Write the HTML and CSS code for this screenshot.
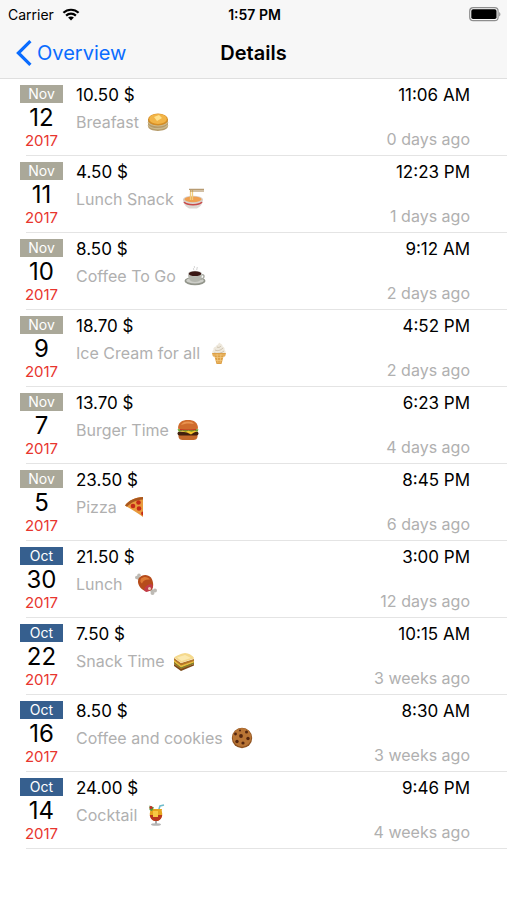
FILE: index.html
```html
<!DOCTYPE html>
<html lang="en">
<head>
  <meta charset="UTF-8">
  <meta name="viewport" content="width=device-width, initial-scale=1">
  <title>Details</title>
  <link rel="stylesheet" href="styles.css">
</head>
<body>
  <header class="header">
    <div class="status">
      <div class="carrier">
        <span>Carrier</span>
        <svg class="wifi" viewBox="0 0 18 13" aria-hidden="true">
          <path d="M1.4 4.8C5.6.7 12.4.7 16.6 4.8M4.1 7.6c2.8-2.6 7-2.6 9.8 0" fill="none" stroke="#000" stroke-width="2.2"/>
          <path d="M9 12.4 6.1 9.6c1.6-1.5 4.2-1.5 5.8 0z"/>
        </svg>
      </div>
      <span class="clock">1:57 PM</span>
      <svg class="battery" viewBox="0 0 32 15" aria-hidden="true">
        <rect x="0.7" y="0.7" width="28.4" height="13" rx="3.5" fill="#f7f7f7" stroke="#8e8e8e" stroke-width="1.2"/>
        <rect x="2.3" y="2.3" width="25.2" height="9.8" rx="1.8"/>
        <path d="M30.2 5v4.6c1.6-.8 1.6-3.8 0-4.6z" fill="#8e8e8e"/>
      </svg>
    </div>
    <nav class="nav">
      <a class="back" href="#">
        <svg class="chevron" viewBox="0 0 16 26" aria-hidden="true">
          <path d="M14.4 1.2 2.4 13l12 11.8" fill="none" stroke="#0a6cff" stroke-width="3.2"/>
        </svg>
        <span>Overview</span>
      </a>
      <h1 class="title">Details</h1>
    </nav>
  </header>

  <ul class="list">
    <li class="item">
      <div class="date">
        <span class="month">Nov</span>
        <span class="day">12</span>
        <span class="year">2017</span>
      </div>
      <div class="info">
        <span class="price">10.50 $</span>
        <span class="name">Breafast
          <svg class="icon" viewBox="0 0 22 22" aria-hidden="true">
            <path d="M1 8v7c0 6.5 19.5 6.5 20 0V8z" fill="#b59a68"/>
            <path d="M1 11c3 5 16 5 20 0M1 14c3 5 16 5 20 0" fill="none" stroke="#cdb98c" stroke-width="1.3"/>
            <ellipse cx="11" cy="8.500" rx="10" ry="6" fill="#d58d25"/>
            <ellipse cx="11" cy="7.900" rx="8.800" ry="5" fill="#f2b447"/>
            <path d="M7 6l5-2 3 3-5 3z" fill="#ffe08a"/>
          </svg>
        </span>
      </div>
      <div class="when">
        <span class="time">11:06 AM</span>
        <span class="ago">0 days ago</span>
      </div>
    </li>
    <li class="item">
      <div class="date">
        <span class="month">Nov</span>
        <span class="day">11</span>
        <span class="year">2017</span>
      </div>
      <div class="info">
        <span class="price">4.50 $</span>
        <span class="name">Lunch Snack
          <svg class="icon" viewBox="0 0 22 22" aria-hidden="true">
            <path d="M1 11c0 5 3 8 6 9.500h8c3-1.500 6-4.500 6-9.500z" fill="#dcd8d3"/>
            <path d="M2 14c3 3.500 15 3.500 18 0" fill="none" stroke="#c94a4a" stroke-width="1.5"/>
            <ellipse cx="11" cy="11.5" rx="10" ry="3.8" fill="#d9cfc8"/>
            <ellipse cx="11" cy="11.3" rx="8.6" ry="2.9" fill="#f0a050"/>
            <path d="M8.500 12V2M10.500 12V2" stroke="#f2cb7a" stroke-width="1.3"/>
            <path d="M7 1.300h15M8 3h14" stroke="#a5824f" stroke-width="1"/>
          </svg>
        </span>
      </div>
      <div class="when">
        <span class="time">12:23 PM</span>
        <span class="ago">1 days ago</span>
      </div>
    </li>
    <li class="item">
      <div class="date">
        <span class="month">Nov</span>
        <span class="day">10</span>
        <span class="year">2017</span>
      </div>
      <div class="info">
        <span class="price">8.50 $</span>
        <span class="name">Coffee To Go
          <svg class="icon" viewBox="0 0 22 22" aria-hidden="true">
            <ellipse cx="11" cy="16" rx="10.5" ry="4.2" fill="#92958b"/>
            <ellipse cx="11" cy="15.5" rx="8.8" ry="3" fill="#cdcec8"/>
            <path d="M16 9.500c6-1 5 5-1 5" fill="none" stroke="#a9aba4" stroke-width="1.5"/>
            <path d="M4 8.500c0 5 2 8.500 7 8.500s7-3.500 7-8.500z" fill="#b4b6ae"/>
            <ellipse cx="11" cy="8.5" rx="7" ry="2.8" fill="#d2d3ce"/>
            <ellipse cx="11" cy="8.7" rx="6.2" ry="2.4" fill="#3a1714"/>
            <path d="M10 5c-2-2 2-2 0-4M13 5c-1-1 1-2 0-3" fill="none" stroke="#ccc" stroke-width="1"/>
          </svg>
        </span>
      </div>
      <div class="when">
        <span class="time">9:12 AM</span>
        <span class="ago">2 days ago</span>
      </div>
    </li>
    <li class="item">
      <div class="date">
        <span class="month">Nov</span>
        <span class="day">9</span>
        <span class="year">2017</span>
      </div>
      <div class="info">
        <span class="price">18.70 $</span>
        <span class="name">Ice Cream for all
          <svg class="icon" viewBox="0 0 22 22" aria-hidden="true">
            <path d="M11 .5c2 1.500 4 2 3.500 4 2 .5 2.500 2 2 3.500 1.500.8 1.500 3 .5 4H5c-1-1-1-3.200.5-4C5 6 6 5 8 4.500 8 3 10.500 3 11 .5z" fill="#eee8dc"/>
            <path d="M7 8c3 1.500 6 0 8-2M6 11c4 1 8 0 10-2M9 5c2 1 3 0 4-1" fill="none" stroke="#c9bda8" stroke-width=".9"/>
            <path d="M4 11h14l-1 3.500h-1.500L13.500 22h-5L6.500 14.500H5z" fill="#dda046"/>
            <path d="M4.500 13h13M7 15.500h8M8 18.500h6M9 12l1 9M13 12l-1 9" stroke="#f2c77b" stroke-width=".8"/>
          </svg>
        </span>
      </div>
      <div class="when">
        <span class="time">4:52 PM</span>
        <span class="ago">2 days ago</span>
      </div>
    </li>
    <li class="item">
      <div class="date">
        <span class="month">Nov</span>
        <span class="day">7</span>
        <span class="year">2017</span>
      </div>
      <div class="info">
        <span class="price">13.70 $</span>
        <span class="name">Burger Time
          <svg class="icon" viewBox="0 0 22 22" aria-hidden="true">
            <path d="M1.500 15h19v2.500c0 2.500-2 3.500-4 3.500h-11c-2 0-4-1-4-3.500z" fill="#c4692c"/>
            <rect x="0.5" y="12.5" width="21" height="4" rx="2" fill="#42200f"/>
            <path d="M1 12h20l-4 1.500-3 2-4-2z" fill="#f5c42d"/>
            <path d="M.5 10.500c2-1.500 19-1.500 21 0l-1 2.200-3-1-3 1-3-1-3 1-3-1-3.500 1z" fill="#6ca32e"/>
            <path d="M3 10h16v1.300H3z" fill="#c33522"/>
            <path d="M1 9.800C1 3.500 5 1 11 1s10 2.500 10 8.800c-4 1-16 1-20 0z" fill="#cf6c2c"/>
            <path d="M4 6c1-2.500 4-3.500 7-3.500s5 .8 6 2.500c-4-1-9-.8-13 1z" fill="#e99350"/>
          </svg>
        </span>
      </div>
      <div class="when">
        <span class="time">6:23 PM</span>
        <span class="ago">4 days ago</span>
      </div>
    </li>
    <li class="item">
      <div class="date">
        <span class="month">Nov</span>
        <span class="day">5</span>
        <span class="year">2017</span>
      </div>
      <div class="info">
        <span class="price">23.50 $</span>
        <span class="name">Pizza
          <svg class="icon" viewBox="0 0 22 22" aria-hidden="true">
            <path d="M0 9.500C4 4 10 1.500 18 1v20C13 17 6 13 0 9.500z" fill="#e89a3d"/>
            <path d="M0 9.500C4 4 10 1.500 18 1v2.500C11 4 6 6.500 2 10.800z" fill="#a9571f"/>
            <g fill="#c52a18">
              <circle cx="8" cy="10" r="2.3"/>
              <circle cx="13.500" cy="6.5" r="2.3"/>
              <circle cx="14" cy="12.5" r="2.3"/>
              <path d="M18 15.500c-2.500 0-2.500 3.500 0 4z"/>
            </g>
          </svg>
        </span>
      </div>
      <div class="when">
        <span class="time">8:45 PM</span>
        <span class="ago">6 days ago</span>
      </div>
    </li>
    <li class="item">
      <div class="date">
        <span class="month month-oct">Oct</span>
        <span class="day">30</span>
        <span class="year">2017</span>
      </div>
      <div class="info">
        <span class="price">21.50 $</span>
        <span class="name">Lunch&nbsp;
          <svg class="icon" viewBox="0 0 22 22" aria-hidden="true">
            <path d="M2 4 7 8M14 16l4.500 2.500" stroke="#b9b5ae" stroke-width="3"/>
            <g fill="#bdbab4">
              <circle cx="1.800" cy="4.500" r="1.8"/>
              <circle cx="4" cy="2.300" r="1.8"/>
              <circle cx="20" cy="17.500" r="2"/>
              <circle cx="17.500" cy="20" r="2"/>
            </g>
            <path d="M4 5c3-4 9-4 12-.5 2 3 3 8 1.500 11-2 3.500-7 3.500-10 1C4 14 1.500 9 4 5z" fill="#b64c1b"/>
            <path d="M6 5.500c3-2.500 7-2 9 1-4-.5-7 1-8 4-2-1-2-3-1-5z" fill="#dd7a34"/>
            <ellipse cx="13.500" cy="15" rx="5" ry="3" fill="#c23c48" transform="rotate(-38 13.500 15)"/>
            <circle cx="14.500" cy="15.500" r="1.5" fill="#e8ceb8"/>
          </svg>
        </span>
      </div>
      <div class="when">
        <span class="time">3:00 PM</span>
        <span class="ago">12 days ago</span>
      </div>
    </li>
    <li class="item">
      <div class="date">
        <span class="month month-oct">Oct</span>
        <span class="day">22</span>
        <span class="year">2017</span>
      </div>
      <div class="info">
        <span class="price">7.50 $</span>
        <span class="name">Snack Time
          <svg class="icon" viewBox="0 0 22 22" aria-hidden="true">
            <path d="M1 8l7 5 13-4v5L8 20l-7-6z" fill="#b5762a"/>
            <path d="M1 10l7 5.500L21 11v1.500L8 17.500 1 12z" fill="#e9bd3f"/>
            <path d="M1 12.500 8 18l13-5" fill="none" stroke="#73852b" stroke-width="1"/>
            <path d="M1 14l7 5 13-5v1.500L8 21l-7-5z" fill="#7b4a18"/>
            <path d="M1 7.500c1-1.500 9-4.500 11-4.500 3 0 9 3 9 5.500L8 13z" fill="#f5d98d"/>
            <path d="M4 7.500 12 5l6 3-9.500 3z" fill="#fbe9b0"/>
          </svg>
        </span>
      </div>
      <div class="when">
        <span class="time">10:15 AM</span>
        <span class="ago">3 weeks ago</span>
      </div>
    </li>
    <li class="item">
      <div class="date">
        <span class="month month-oct">Oct</span>
        <span class="day">16</span>
        <span class="year">2017</span>
      </div>
      <div class="info">
        <span class="price">8.50 $</span>
        <span class="name">Coffee and cookies
          <svg class="icon" viewBox="0 0 22 22" aria-hidden="true">
            <circle cx="11" cy="11" r="10.200" fill="#8e5220"/>
            <circle cx="11" cy="10.400" r="9.300" fill="#b97535"/>
            <g fill="#55260f">
              <circle cx="10" cy="9" r="1.9"/>
              <circle cx="4.500" cy="7" r="1.4"/>
              <circle cx="15.500" cy="5" r="1.5"/>
              <circle cx="17" cy="11.500" r="1.7"/>
              <circle cx="6" cy="14.500" r="1.7"/>
              <circle cx="12" cy="16" r="1.6"/>
              <circle cx="9" cy="3.500" r="1"/>
            </g>
          </svg>
        </span>
      </div>
      <div class="when">
        <span class="time">8:30 AM</span>
        <span class="ago">3 weeks ago</span>
      </div>
    </li>
    <li class="item">
      <div class="date">
        <span class="month month-oct">Oct</span>
        <span class="day">14</span>
        <span class="year">2017</span>
      </div>
      <div class="info">
        <span class="price">24.00 $</span>
        <span class="name">Cocktail
          <svg class="icon" viewBox="0 0 22 22" aria-hidden="true">
            <path d="M13 8l2-6 4-1" fill="none" stroke="#6fbccb" stroke-width="1.5"/>
            <path d="M11 16v4" stroke="#aaa" stroke-width="2"/>
            <ellipse cx="11" cy="20.500" rx="5" ry="1.3" fill="#b5b5b5"/>
            <path d="M5 5h12c-1 2 1 4 0 7-1 3-3 5-6 5s-5-2-6-5c-1-3 1-5 0-7z" fill="#e6a51e"/>
            <path d="M4.800 11h12.400c-.5 4-3 6-6.200 6s-5.700-2-6.200-6z" fill="#b8371f"/>
            <path d="M8 7h5v6H8z" fill="#f7c943"/>
            <path d="M4.500 1.500 9 3.500 7 7 4.500 6z" fill="#4f9a3e"/>
            <circle cx="6" cy="3.500" r="1.5" fill="#c92c25"/>
          </svg>
        </span>
      </div>
      <div class="when">
        <span class="time">9:46 PM</span>
        <span class="ago">4 weeks ago</span>
      </div>
    </li>
  </ul>
</body>
</html>
```
FILE: styles.css
```css
* {
  margin: 0;
  padding: 0;
  box-sizing: border-box;
}
body {
  background: #fff;
  color: #000;
  font-family: Inter, "Liberation Sans", sans-serif;
  font-size: 16px;
}
ul {
  list-style: none;
}

/* top bar */
.header {
  background: #f7f7f7;
  border-bottom: 1px solid #dfdfdf;
}
.status,
.nav {
  display: grid;
  grid-template-columns: 1fr auto 1fr;
  align-items: center;
}
.status {
  height: 28px;
  padding: 0 6px 0 8px;
  font-size: 14px;
}
.carrier {
  display: flex;
  align-items: center;
  gap: 8px;
}
.wifi {
  width: 18px;
  height: 13px;
}
.clock {
  font-weight: 600;
}
.battery {
  width: 32px;
  height: 15px;
  justify-self: end;
}
.nav {
  height: 50px;
  padding: 0 16px;
}
.back {
  display: flex;
  align-items: center;
  gap: 5px;
  color: #0a6cff;
  font-size: 20px;
  text-decoration: none;
}
.chevron {
  width: 16px;
  height: 26px;
}
.title {
  font-size: 20px;
  font-weight: 600;
}

/* expenses */
.item {
  display: flex;
  gap: 13px;
  height: 77px;
  padding: 6px 37px 0 20px;
  background: linear-gradient(#e4e4e4, #e4e4e4) 26px 100% / 100% 1px no-repeat;
}
.date {
  display: flex;
  flex-direction: column;
  width: 43px;
  text-align: center;
}
.month {
  background: #aaa899;
  color: #fff;
  font-size: 14px;
  line-height: 18px;
}
.month-oct {
  background: #365f8e;
}
.day {
  font-size: 24px;
  line-height: 30px;
}
.year {
  color: #e8352e;
  font-size: 15px;
  line-height: 16px;
}
.info,
.when {
  display: flex;
  flex-direction: column;
  line-height: 20px;
}
.info {
  flex: 1;
  gap: 6px;
}
.when {
  gap: 24px;
  text-align: right;
}
.price,
.time {
  font-size: 17px;
}
.name,
.ago {
  color: #b0b0b0;
}
.name {
  display: flex;
  align-items: center;
  gap: 8px;
}
.icon {
  width: 22px;
  height: 22px;
}
```
